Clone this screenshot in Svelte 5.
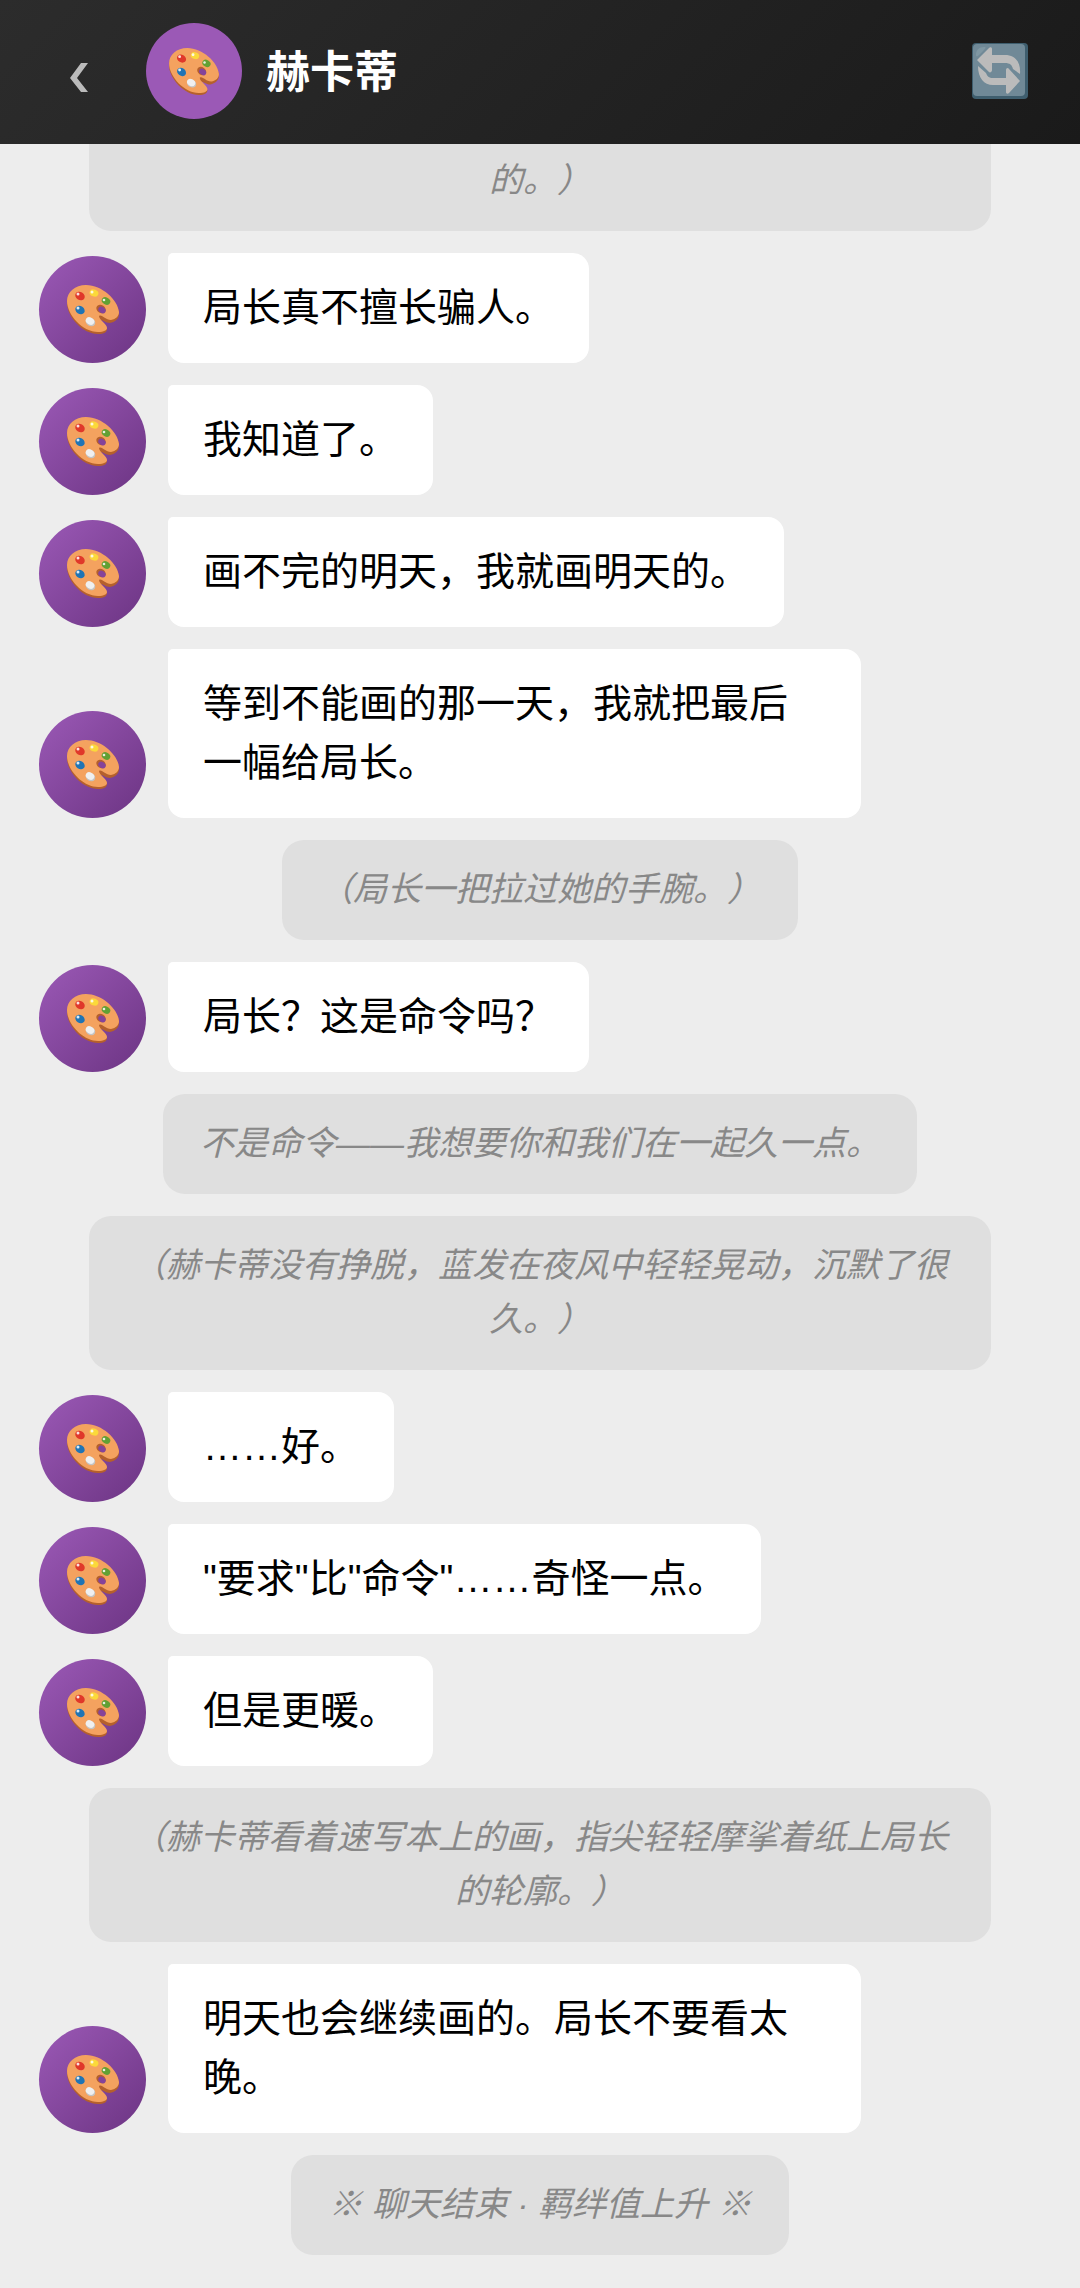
<script>
	import { onMount } from 'svelte'

	const contact = '赫卡蒂'

	const messages = [
		{ type: 'note', text: '（赫卡蒂合上了速写本，目光停在夜色里还没有画完的。）' },
		{ type: 'chat', text: '局长真不擅长骗人。' },
		{ type: 'chat', text: '我知道了。' },
		{ type: 'chat', text: '画不完的明天，我就画明天的。' },
		{ type: 'chat', text: '等到不能画的那一天，我就把最后一幅给局长。' },
		{ type: 'note', text: '（局长一把拉过她的手腕。）' },
		{ type: 'chat', text: '局长？这是命令吗？' },
		{ type: 'note', text: '不是命令——我想要你和我们在一起久一点。' },
		{ type: 'note', text: '（赫卡蒂没有挣脱，蓝发在夜风中轻轻晃动，沉默了很久。）' },
		{ type: 'chat', text: '……好。' },
		{ type: 'chat', text: '"要求"比"命令"……奇怪一点。' },
		{ type: 'chat', text: '但是更暖。' },
		{ type: 'note', text: '（赫卡蒂看着速写本上的画，指尖轻轻摩挲着纸上局长的轮廓。）' },
		{ type: 'chat', text: '明天也会继续画的。局长不要看太晚。' },
		{ type: 'note', text: '※ 聊天结束 · 羁绊值上升 ※' }
	]

	let list

	// open the chat at the latest message
	onMount(() => {
		list.scrollTop = list.scrollHeight
	})
</script>

{#snippet palette()}
	<svg class="palette" viewBox="0 0 52 49" aria-hidden="true">
		<path
			fill="#b5602c"
			d="M19 2C8 2 0 9 0 18c0 14 16 31 31 31 6 0 9-2 9-5 0-4-8-6-8-9 3-1 6 3 11 3 5-1 9-4 9-9C52 17 35 2 19 2z"
		/>
		<path
			fill="#f4a25f"
			d="M19 0C8 0 0 7 0 16c0 14 16 31 31 31 6 0 9-2 9-4 0-4-8-8-8-12 3-2 6 4 12 4 5-1 8-4 8-8C51 15 35 0 19 0z"
		/>
		<ellipse cx="34" cy="24" rx="5" ry="4" transform="rotate(35 34 24)" fill="#b5602c" />
		<ellipse cx="35" cy="25" rx="4" ry="3" transform="rotate(35 35 25)" fill="#85439a" />
		<ellipse cx="13" cy="11" rx="5" ry="4" transform="rotate(30 13 11)" fill="#e0382a" />
		<ellipse cx="27" cy="8" rx="4.5" ry="3.5" transform="rotate(20 27 8)" fill="#fbd93a" />
		<ellipse cx="39" cy="16" rx="4.5" ry="3.5" transform="rotate(30 39 16)" fill="#62a033" />
		<ellipse cx="13" cy="25" rx="5" ry="4" transform="rotate(35 13 25)" fill="#1f74b5" />
		<ellipse cx="23.5" cy="37" rx="5" ry="4" transform="rotate(30 23.5 37)" fill="#c4c4c4" />
		<ellipse cx="23" cy="36" rx="4.5" ry="3.5" transform="rotate(30 23 36)" fill="#f0f0f0" />
		<g fill="#fff" opacity=".85">
			<circle cx="11" cy="9" r="1.5" />
			<circle cx="25" cy="7" r="1.5" />
			<circle cx="37" cy="15" r="1.3" />
			<circle cx="11" cy="23" r="1.5" />
		</g>
	</svg>
{/snippet}

<div class="phone">
	<header class="header">
		<button class="back" aria-label="返回">
			<svg viewBox="0 0 20 30" aria-hidden="true">
				<path fill="currentColor" d="M12 0h7L8 15l11 14h-7L1 15z" />
			</svg>
		</button>
		<div class="header-avatar">{@render palette()}</div>
		<h1>{contact}</h1>
		<button class="refresh" aria-label="重新开始">
			<svg viewBox="0 0 56 56" aria-hidden="true">
				<rect width="56" height="56" rx="4" fill="#4e7b92" />
				<rect x="1" y="1" width="52" height="52" rx="4" fill="#94b8cb" />
				<path
					fill="#a9cbdc"
					d="M4 12c0-5 3-8 8-8 3 0 1 2-1 4s-7 8-7 4z"
				/>
				<path
					fill="#fff"
					d="M5 17 17 5c1-1 3-1 3 1v6h13c10 0 16 7 15 19l-7-5c-1-4-3-6-8-6H20v7c0 2-2 3-3 2L5 17z"
				/>
				<path
					fill="#fff"
					d="M48 38 37 50c-1 1-3 1-3-1v-7H21C12 42 6 35 6 23l8 7c1 3 3 5 7 5h13v-8c0-2 2-3 3-1l11 12z"
				/>
			</svg>
		</button>
	</header>

	<main class="messages" bind:this={list}>
		{#each messages as message, i (i)}
			{#if message.type === 'note'}
				<p class="note">{message.text}</p>
			{:else}
				<div class="row">
					<div class="avatar">{@render palette()}</div>
					<p class="bubble">{message.text}</p>
				</div>
			{/if}
		{/each}
	</main>
</div>

<style>
	:global(body) {
		background: #ededed;
	}

	.phone {
		display: flex;
		flex-direction: column;
		height: 100vh;
		font-family: 'Liberation Sans', 'Noto Sans CJK SC', sans-serif;
		text-spacing-trim: space-all;
	}

	.header {
		display: flex;
		align-items: center;
		flex-shrink: 0;
		height: 144px;
		padding: 0 44px 2px;
		box-sizing: border-box;
		background: linear-gradient(135deg, #2c2c2c, #1a1a1a);
		color: #fff;
	}

	.header button {
		display: flex;
		align-items: center;
		justify-content: center;
		padding: 0;
		border: none;
		background: none;
		color: #bbb;
		cursor: pointer;
	}

	.header .back {
		width: 70px;
		height: 96px;
		padding-top: 14px;
		margin-right: 32px;
	}

	.back svg {
		width: 20px;
		height: 30px;
	}

	.header-avatar {
		display: flex;
		align-items: center;
		justify-content: center;
		width: 96px;
		height: 96px;
		border-radius: 50%;
		background: #9b59b6;
	}

	.header-avatar .palette {
		width: 50px;
		height: 47px;
	}

	h1 {
		flex: 1;
		margin: 0;
		padding: 4px 24px 0;
		font-size: 44px;
		line-height: 60px;
		font-weight: 700;
	}

	.refresh {
		width: 72px;
		height: 72px;
		opacity: 0.7;
	}

	.refresh svg {
		width: 56px;
		height: 56px;
	}

	.palette {
		width: 52px;
		height: 49px;
	}

	.messages {
		flex: 1;
		display: flex;
		flex-direction: column;
		gap: 22px;
		min-height: 0;
		padding: 33px 39px;
		overflow-y: auto;
		scrollbar-width: none;
	}

	.row {
		display: flex;
		flex-shrink: 0;
		align-items: flex-end;
		gap: 22px;
		max-width: 82%;
	}

	.avatar {
		display: flex;
		align-items: center;
		justify-content: center;
		flex-shrink: 0;
		width: 107px;
		height: 107px;
		border-radius: 50%;
		background: linear-gradient(135deg, #9b59b6, #6c3483);
	}

	.bubble {
		margin: 0;
		padding: 25px 35px 26px;
		border-radius: 5px 16px 16px 16px;
		background: #fff;
		color: #000;
		font-size: 39px;
		line-height: 59px;
	}

	.note {
		flex-shrink: 0;
		align-self: center;
		box-sizing: border-box;
		max-width: 90%;
		margin: 0;
		padding: 22px 37px 24px;
		border-radius: 22px;
		background: #dfdfdf;
		color: #888;
		font-size: 34px;
		font-style: italic;
		line-height: 54px;
		text-align: center;
	}
</style>
